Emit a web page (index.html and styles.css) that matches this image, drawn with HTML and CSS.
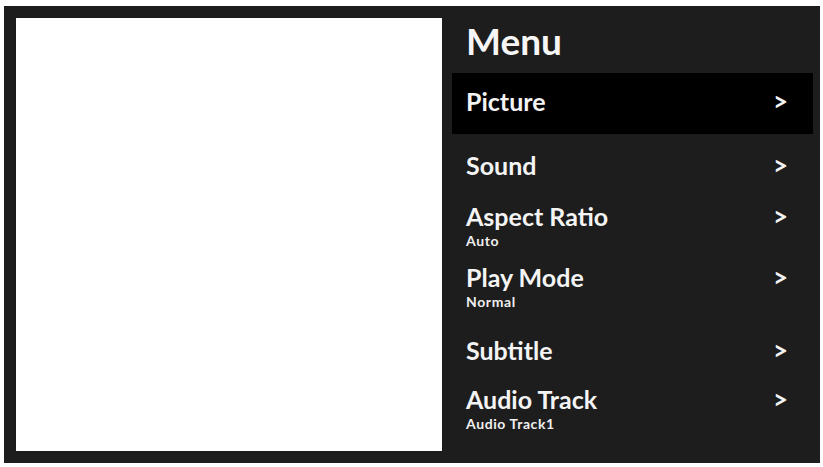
FILE: index.html
```html
<!DOCTYPE html>
<html lang="en">
<head>
<meta charset="utf-8">
<title>Menu</title>
<link rel="stylesheet" href="styles.css">
</head>
<body>
<div class="frame">
  <div class="preview"></div>
  <div class="menu">
    <h1 class="menu-title">Menu</h1>
    <ul class="menu-list">
      <li class="item is-active">
        <div class="item-line"><span class="item-title">Picture</span><span class="chev">&gt;</span></div>
      </li>
      <li class="item">
        <div class="item-line"><span class="item-title">Sound</span><span class="chev">&gt;</span></div>
      </li>
      <li class="item">
        <div class="item-line"><span class="item-title">Aspect Ratio</span><span class="chev">&gt;</span></div>
        <div class="item-sub">Auto</div>
      </li>
      <li class="item">
        <div class="item-line"><span class="item-title">Play Mode</span><span class="chev">&gt;</span></div>
        <div class="item-sub">Normal</div>
      </li>
      <li class="item item-low">
        <div class="item-line"><span class="item-title">Subtitle</span><span class="chev">&gt;</span></div>
      </li>
      <li class="item">
        <div class="item-line"><span class="item-title">Audio Track</span><span class="chev">&gt;</span></div>
        <div class="item-sub">Audio Track1</div>
      </li>
    </ul>
  </div>
</div>
</body>
</html>
```
FILE: styles.css
```css
* { box-sizing: border-box; }
html, body {
  margin: 0;
  padding: 0;
  background: #ffffff;
}
body {
  font-family: Lato, "Open Sans", "Liberation Sans", sans-serif;
  color: #f4f4f4;
}
.frame {
  width: 816px;
  height: 457px;
  margin: 6px 0 0 4px;
  padding: 12px 7px 12px 12px;
  background: #1d1d1d;
  display: flex;
}
.preview {
  width: 426px;
  flex: none;
  background: #ffffff;
  box-shadow: 0 0 1px rgba(0,0,0,0.4);
}
.menu {
  flex: 1;
  padding-left: 10px;
  display: flex;
  flex-direction: column;
}
.menu-title {
  margin: 0;
  padding: 0 0 10px 14px;
  font-size: 37px;
  line-height: 45px;
  font-weight: 700;
  color: #f6f6f6;
}
.menu-list {
  list-style: none;
  margin: 0;
  padding: 0;
}
.item {
  height: 61px;
  padding: 0 25px 0 14px;
  display: flex;
  flex-direction: column;
  justify-content: center;
}
.item.is-active {
  background: #000000;
  padding-bottom: 5px;
}
.item.item-low {
  padding-top: 4px;
}
.item-line {
  display: flex;
  justify-content: space-between;
  align-items: center;
  font-size: 25px;
  line-height: 28px;
  font-weight: 700;
}
.chev {
  font-size: 26px;
  font-weight: 700;
}
.item-sub {
  margin-top: 3px;
  font-size: 14px;
  line-height: 16px;
  font-weight: 700;
  letter-spacing: 0.6px;
  color: #efefef;
}
```
